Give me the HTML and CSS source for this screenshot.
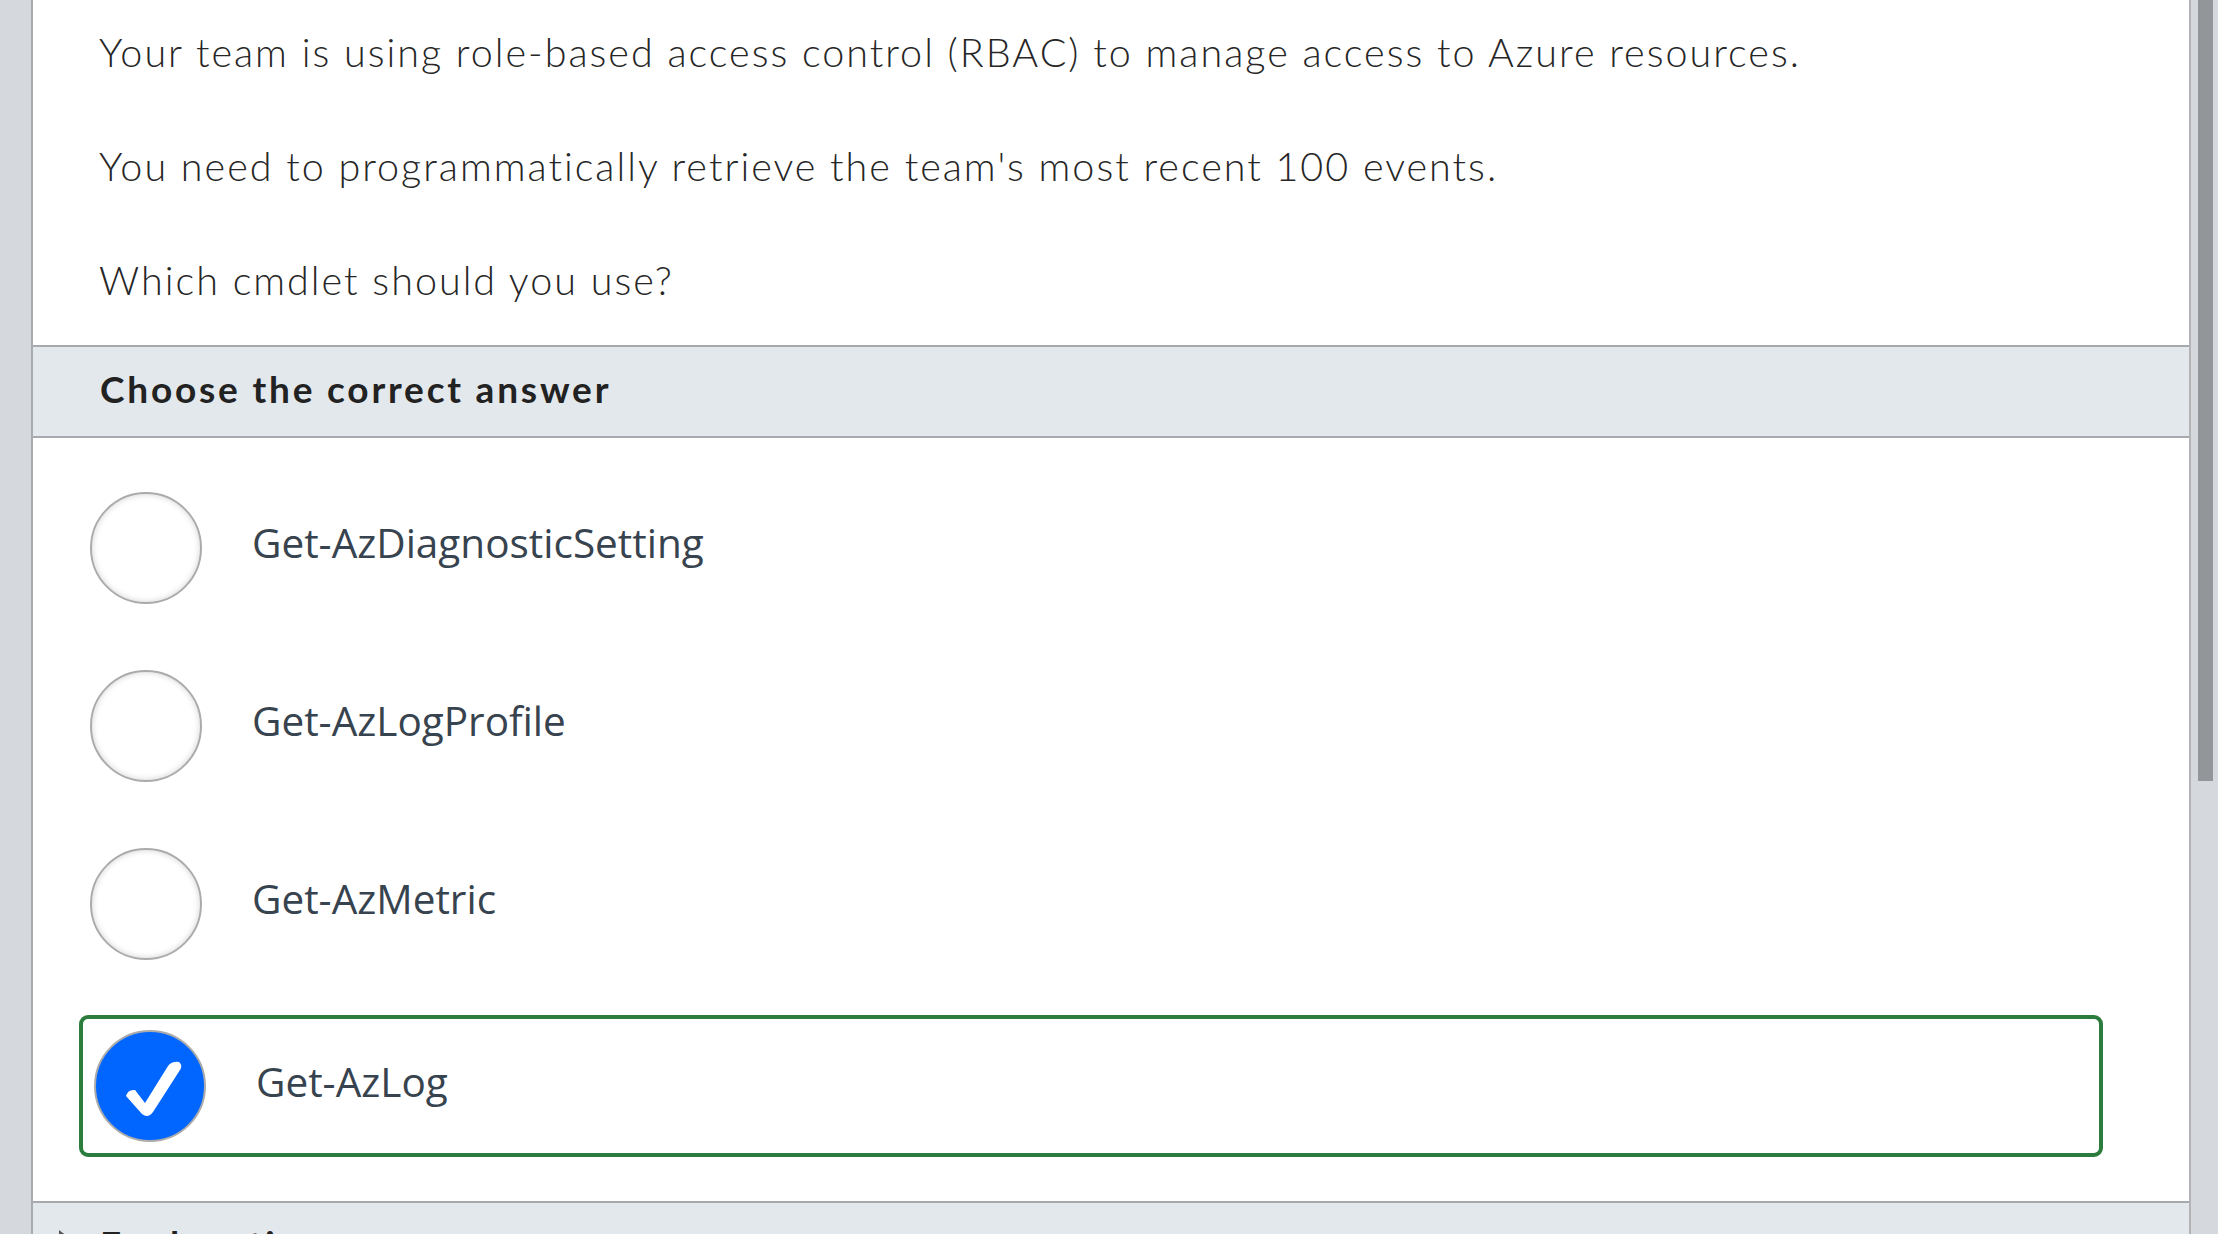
FILE: index.html
```html
<!DOCTYPE html>
<html lang="en">
<head>
<meta charset="utf-8">
<title>Question</title>
<link rel="stylesheet" href="styles.css">
</head>
<body>
<div class="app">
  <div class="gutter"></div>
  <main class="panel">
    <section class="question">
      <p>Your team is using role-based access control (RBAC) to manage access to Azure resources.</p>
      <p>You need to programmatically retrieve the team's most recent 100 events.</p>
      <p>Which cmdlet should you use?</p>
    </section>
    <div class="section-head">Choose the correct answer</div>
    <ul class="options">
      <li class="option"><span class="radio"></span><span class="label">Get-AzDiagnosticSetting</span></li>
      <li class="option"><span class="radio"></span><span class="label">Get-AzLogProfile</span></li>
      <li class="option"><span class="radio"></span><span class="label">Get-AzMetric</span></li>
      <li class="option selected"><span class="radio checked"><svg viewBox="0 0 108 108" width="108" height="108"><path d="M30 64 Q32 57 39 58 L49 71 L72 34 Q76 29 83 30 Q87 33 84 38 L57 80 Q52 87 46 82 Z" fill="#ffffff"/></svg></span><span class="label">Get-AzLog</span></li>
    </ul>
    <div class="section-head explain"><span class="caret"></span>Explanation</div>
  </main>
  <div class="scrollbar"><div class="thumb"></div></div>
</div>
</body>
</html>
```
FILE: styles.css
```css
html, body {
  margin: 0;
  padding: 0;
  height: 100%;
  overflow: hidden;
}
body {
  background: #d5d9de;
  font-family: Lato, "Open Sans", sans-serif;
}
.app {
  display: flex;
  height: 1234px;
}
.gutter {
  width: 31px;
  flex: none;
  background: #d5d9de;
}
.panel {
  flex: 1;
  background: #ffffff;
  border-left: 2px solid #a9abae;
  border-right: 2px solid #b3b3b5;
  overflow: hidden;
}
.scrollbar {
  width: 27px;
  flex: none;
  background: #d5d9de;
  padding-left: 7px;
  box-sizing: border-box;
}
.thumb {
  width: 15px;
  height: 781px;
  background: #939699;
}
.question {
  padding: 25px 0 38px 66px;
}
.question p {
  margin: 0 0 60px;
  font-size: 39.5px;
  font-weight: 300;
  line-height: 54px;
  color: #262626;
  letter-spacing: 2px;
}
.question p:last-child {
  margin-bottom: 0;
}
.section-head {
  border-top: 2px solid #a6a9ad;
  border-bottom: 2px solid #a6a9ad;
  background: #e3e8ec;
  box-sizing: content-box;
  display: flex;
  align-items: center;
  padding-left: 67px;
  padding-bottom: 6px;
  height: 83px;
  font-size: 37px;
  font-weight: 700;
  color: #222222;
  letter-spacing: 2.8px;
}
.section-head.explain {
  border-bottom: none;
  align-items: flex-start;
  padding-top: 18px;
  padding-bottom: 0;
  height: 89px;
  box-sizing: border-box;
  position: relative;
}
.caret {
  position: absolute;
  left: 26px;
  top: 27px;
  width: 0;
  height: 0;
  border-top: 7px solid transparent;
  border-bottom: 7px solid transparent;
  border-left: 9px solid #555;
}
.options {
  list-style: none;
  margin: 0;
  padding: 39px 86px 44px 46px;
  display: flex;
  flex-direction: column;
  gap: 36px;
}
.option {
  height: 142px;
  box-sizing: border-box;
  border: 4px solid transparent;
  border-radius: 9px;
  display: flex;
  align-items: center;
  padding-left: 7px;
  gap: 50px;
}
.option.selected {
  border-color: #2c7d3d;
  padding-left: 11px;
  margin-top: 4px;
}
.radio {
  width: 112px;
  height: 112px;
  box-sizing: border-box;
  border-radius: 50%;
  border: 2px solid #ababab;
  background: #ffffff;
  box-shadow: inset 0 0 6px rgba(0, 0, 0, 0.18);
  flex: none;
  display: flex;
}
.radio.checked {
  background: #0066ff;
  box-shadow: none;
}
.radio svg {
  width: 108px;
  height: 108px;
}
.label {
  font-family: "Open Sans", sans-serif;
  font-size: 40.5px;
  color: #37434e;
  line-height: 1;
  margin-top: -9px;
}
.option.selected .label {
  margin-top: -7px;
}
```
